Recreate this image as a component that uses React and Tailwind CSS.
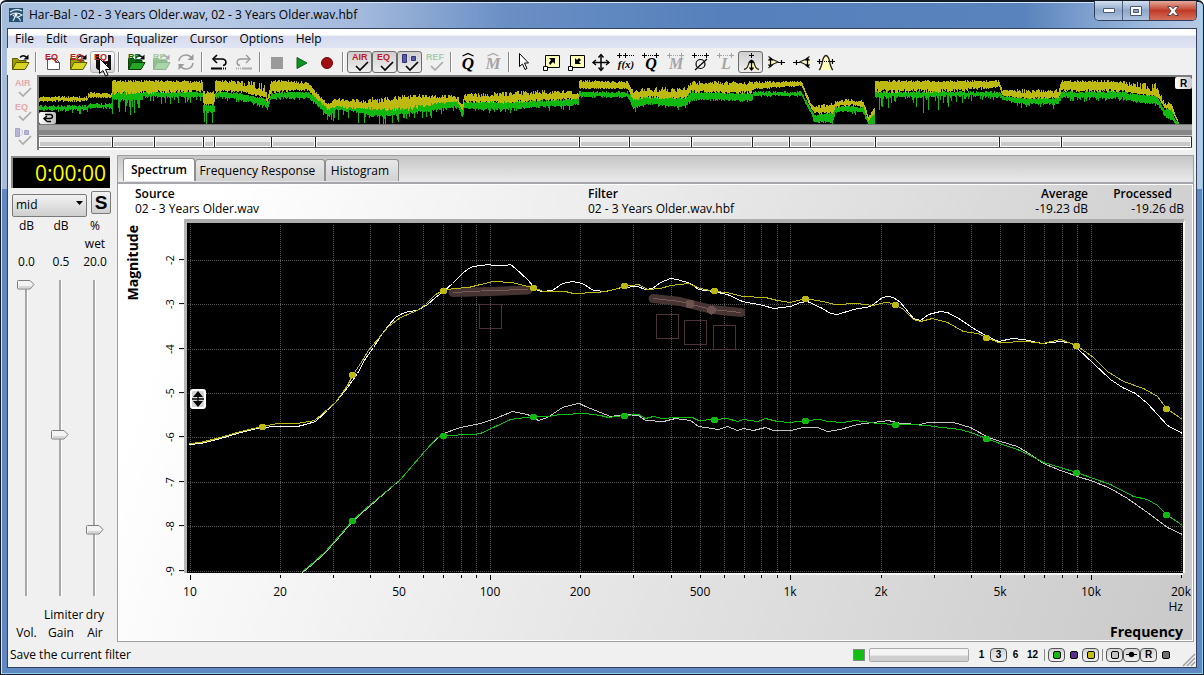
import { useState } from "react";

/* ---------- data ---------- */

const upperSource =
  "189,444 200,443 220,438 240,432 260,427 277,426 297,426 305,424 315,421 327,410 335,402 347,387 357,373 365,358 373,347 382,333 388,325 395,317 402,313 408,311 417,310 427,304 435,297 443,291 452,283 462,273 468,268 473,266 488,264 493,265 505,265 510,264 515,268 527,279 533,286 537,290 542,291 552,290 562,283 572,281 582,283 593,290 605,291 622,287 637,286 645,289 652,288 660,282 670,278 677,279 690,283 698,289 713,291 727,294 742,301 763,305 773,308 790,306 800,302 807,301 822,308 830,313 837,314 853,309 870,306 882,297 888,296 893,297 900,302 913,318 920,320 928,314 940,311 947,312 960,319 973,328 987,336 998,341 1012,338 1023,339 1042,343 1060,341 1072,343 1078,349 1093,363 1110,379 1122,387 1135,393 1147,403 1167,425 1182,433";
const upperFiltered =
  "189,443 200,442 220,437 240,431 262,426 277,423 297,423 314,420 335,402 347,385 352,375 362,360 368,350 382,333 388,326 400,317 417,310 425,304 435,294 443,290 453,288 468,287 480,284 493,281 512,282 523,285 533,287 543,291 565,291 573,293 597,292 610,290 624,286 638,284 647,289 660,288 670,285 688,283 700,288 714,291 727,292 742,296 765,297 777,300 790,302 805,298 822,301 835,304 857,303 872,305 885,302 893,303 903,309 913,319 920,321 932,318 947,322 963,331 977,333 986,337 998,342 1027,341 1042,343 1060,339 1076,345 1093,357 1107,371 1123,381 1143,388 1157,396 1166,408 1182,419";
const lowerSource =
  "302,572 313,563 325,552 340,535 352,521 370,505 400,479 425,450 437,438 443,433 460,427 480,423 495,418 512,411 527,414 538,420 547,417 562,407 573,404 579,403 585,406 600,412 610,416 624,414 638,415 645,420 663,421 675,418 690,420 698,426 718,429 727,426 737,430 743,428 753,430 765,427 773,430 790,430 803,427 817,427 827,431 840,429 857,424 873,422 888,420 900,423 920,424 927,422 953,422 970,427 988,437 1000,441 1017,446 1030,454 1043,463 1060,470 1077,476 1093,481 1110,488 1127,498 1147,512 1167,527 1182,534";
const lowerFiltered =
  "302,571 313,562 325,551 340,534 352,520 370,504 400,479 425,450 437,437 443,435 473,434 480,433 495,426 510,419 533,416 547,416 560,414 585,413 600,415 608,417 624,415 638,414 645,418 653,416 662,418 675,417 692,417 698,420 714,419 727,418 737,421 743,419 757,421 765,418 777,421 790,422 805,420 820,419 827,421 843,422 855,420 877,423 895,424 910,424 927,425 933,426 960,429 973,433 986,438 1002,444 1017,449 1030,455 1043,462 1060,467 1076,472 1093,478 1110,484 1133,496 1147,499 1157,505 1166,514 1182,525";

const upperNodes = [[262, 427], [352, 375], [443, 291], [533, 288], [624, 286], [714, 291], [805, 299], [895, 305], [986, 338], [1076, 346], [1166, 409]];
const lowerNodes = [[352, 521], [443, 436], [533, 417], [624, 416], [714, 420], [805, 421], [895, 425], [986, 439], [1076, 473], [1166, 515]];

const xOf = (f) => Math.round(189.5 + 300.4 * Math.log10(f / 10));
const pctX = (x) => `${((x - 187) / 996) * 100}%`;
const pctY = (y) => `${((y - 223) / 350) * 100}%`;

const gridFreqs = [10, 20, 30, 40, 50, 60, 70, 80, 90, 100, 200, 300, 400, 500, 600, 700, 800, 900, 1000, 2000, 3000, 4000, 5000, 6000, 7000, 8000, 9000, 10000, 20000];
const levels = [[-2, 260], [-3, 304], [-4, 349], [-5, 393], [-6, 437], [-7, 482], [-8, 526], [-9, 571]];
const freqLabels = [[10, "10"], [20, "20"], [50, "50"], [100, "100"], [200, "200"], [500, "500"], [1000, "1k"], [2000, "2k"], [5000, "5k"], [10000, "10k"], [20000, "20k"]];

/* x, yellow top, yellow bottom, green top, green bottom, upward jitter, yellow drop, green drop */
const envelope = [
  [39, 98, 101, 108, 110, 2, 2, 2], [87, 98, 101, 108, 110, 2, 2, 6], [88, 94, 98, 106, 108, 2, 1, 1], [111, 95, 98, 106, 108, 2, 1, 1],
  [112, 82, 92, 94, 100, 2, 4, 17], [142, 82, 92, 94, 100, 2, 3, 16], [143, 82, 91, 94, 97, 2, 4, 8], [202, 83, 91, 94, 97, 3, 3, 8],
  [203, 94, 103, 107, 112, 3, 4, 16], [214, 94, 103, 107, 112, 3, 4, 16], [215, 82, 91, 94, 97, 2, 3, 4], [235, 84, 91, 95, 99, 4, 2, 5],
  [250, 88, 94, 98, 102, 7, 2, 4], [265, 92, 97, 101, 106, 10, 3, 4], [267, 99, 103, 105, 109, 4, 1, 3], [271, 82, 91, 95, 98, 3, 3, 5],
  [308, 84, 90, 94, 98, 2, 2, 2], [316, 94, 98, 99, 104, 2, 2, 4], [328, 106, 110, 110, 117, 4, 2, 7], [336, 101, 106, 106, 110, 3, 3, 12],
  [360, 104, 108, 108, 112, 5, 3, 12], [372, 103, 108, 109, 116, 6, 3, 12], [390, 102, 109, 110, 116, 6, 3, 12], [401, 99, 108, 108, 114, 5, 6, 7],
  [430, 98, 104, 105, 111, 4, 3, 8], [457, 99, 102, 102, 106, 4, 1, 5], [462, 107, 111, 112, 117, 3, 1, 4], [464, 97, 101, 104, 109, 4, 3, 4],
  [500, 97, 102, 104, 109, 5, 3, 6], [540, 94, 100, 103, 107, 5, 3, 5], [570, 94, 99, 101, 105, 4, 2, 6], [578, 95, 98, 100, 104, 2, 2, 3],
  [579, 82, 89, 94, 97, 2, 1, 2], [626, 83, 89, 94, 97, 2, 1, 2], [632, 93, 99, 100, 108, 3, 4, 7], [645, 92, 97, 99, 104, 5, 3, 4],
  [684, 93, 98, 100, 107, 7, 3, 5], [690, 85, 91, 94, 99, 4, 3, 3], [750, 85, 92, 96, 101, 4, 3, 2], [752, 84, 89, 94, 96, 3, 2, 3],
  [800, 82, 86, 94, 96, 1, 1, 1], [809, 103, 107, 110, 113, 1, 2, 2], [813, 108, 113, 117, 122, 3, 2, 4], [831, 107, 112, 115, 122, 4, 3, 3],
  [834, 103, 107, 109, 112, 2, 2, 9], [850, 101, 105, 108, 111, 3, 2, 9], [862, 103, 107, 109, 113, 3, 2, 6], [867, 118, 122, 122, 125, 1, 0, 1],
  [873, 109, 114, 115, 124, 2, 1, 2], [874, 82, 90, 94, 97, 2, 5, 16], [900, 82, 90, 94, 97, 2, 4, 8], [925, 82, 90, 94, 97, 2, 4, 18],
  [960, 82, 89, 94, 96, 2, 4, 8], [998, 82, 87, 94, 97, 2, 2, 4], [1001, 91, 96, 98, 100, 2, 1, 1], [1020, 93, 98, 100, 104, 4, 2, 7],
  [1057, 93, 98, 100, 104, 4, 2, 6], [1060, 82, 90, 94, 97, 2, 3, 6], [1120, 83, 90, 94, 98, 3, 3, 4], [1130, 87, 93, 96, 101, 5, 2, 5],
  [1156, 93, 97, 98, 104, 10, 1, 4], [1163, 105, 108, 112, 115, 3, 1, 3], [1170, 104, 110, 111, 119, 4, 2, 5], [1174, 115, 119, 122, 125, 1, 0, 0], [1178, 124, 125, 125, 125, 0, 0, 0],
];

function buildTraces() {
  let seed = 7;
  const rnd = () => {
    seed = (seed * 16807) % 2147483647;
    return seed / 2147483647;
  };
  let yellow = "";
  let green = "";
  for (let i = 0; i < envelope.length - 1; i++) {
    const a = envelope[i];
    const b = envelope[i + 1];
    for (let x = a[0]; x < b[0]; x++) {
      const t = (x - a[0]) / (b[0] - a[0]);
      const v = a.map((n, k) => n + (b[k] - n) * t);
      const yt = Math.max(81, Math.round(v[1] + 1 - rnd() * v[5]));
      const yb = Math.round(v[2] + rnd() * v[6]);
      const gt = Math.round(v[3] - rnd() * 2);
      const spike = rnd() > 0.62 ? rnd() * v[7] : rnd() * 2;
      const gb = Math.min(125, Math.round(v[4] + spike));
      yellow += `M${x} ${yt}h1V${Math.min(yb, 125)}h-1z`;
      green += `M${x} ${gt}h1V${Math.max(gb, gt + 1)}h-1z`;
    }
  }
  return { yellow, green };
}
const traces = buildTraces();
const cuts = [38, 112, 154, 203, 214, 271, 315, 579, 629, 690, 751, 788, 809, 874, 998, 1060, 1190];

/* ---------- icons ---------- */

function Svg({ children, size = 24 }) {
  return (
    <svg viewBox={`0 0 ${size} ${size}`} width={size} height={size} className="block shrink-0" aria-hidden="true">
      {children}
    </svg>
  );
}

const Tag = ({ x = 0, y = 10, fill = "#c01c28", children }) => (
  <text x={x} y={y} fill={fill} fontSize="9" fontWeight="bold" fontFamily="Liberation Sans, Arial, sans-serif">{children}</text>
);

function Folder({ a, b, edge, arrow = "#000" }) {
  return (
    <>
      <path d="M4.500 19.500V8.500h5l1.500 2h7v2" fill={b} stroke={edge} />
      <path d="M4.500 19.500l3.500-7h13l-4 7z" fill={a} stroke={edge} />
      <path d="M12 7.500q3-3.500 7 0" fill="none" stroke={arrow} strokeWidth="1.300" />
      <path d="M20.500 4.500v5h-5z" fill={arrow} />
    </>
  );
}

const Open = () => <Svg><Folder a="#d8d425" b="#a09c00" edge="#5b5900" /></Svg>;
const EqNew = () => (
  <Svg>
    <path d="M6.500 8.500h8l4 4v7h-12z" fill="#fff" stroke="#555" />
    <path d="M14.500 8.500v4h4" fill="none" stroke="#555" />
    <Tag x={4}>EQ</Tag>
  </Svg>
);
const EqOpen = () => <Svg><Folder a="#d8d425" b="#a09c00" edge="#5b5900" /><Tag x={4}>EQ</Tag></Svg>;
const EqSave = () => (
  <Svg>
    <path d="M5 5h15v15h-13l-2-2z" fill="#111" />
    <path d="M8 5h9v6h-9z" fill="#f2f2f2" />
    <path d="M9 14h7v6h-7z" fill="#ddd" />
    <Tag x={3}>EQ</Tag>
  </Svg>
);
const RefOpen = () => <Svg><Folder a="#28a428" b="#0c6c0c" edge="#073f07" /><Tag x={4} fill="#126b12">RE</Tag></Svg>;
const RefDim = () => <Svg><Folder a="#a9d6a9" b="#8fc08f" edge="#8db58d" arrow="#a9a9a9" /><Tag x={4} fill="#a5cba5">RE</Tag></Svg>;
const Refresh = () => (
  <Svg>
    <path d="M5 11a7 6.500 0 0 1 12-4M19 13a7 6.500 0 0 1-12 4" fill="none" stroke="#9a9a9a" strokeWidth="1.500" />
    <path d="M19.500 4v6h-6zM4.500 20v-6h6z" fill="#9a9a9a" />
  </Svg>
);
const Undo = () => (
  <Svg>
    <path d="M6 9h9c5 0 5 6 1 6.500" fill="none" stroke="#000" strokeWidth="1.600" />
    <path d="M10 5L6 9l4 4" fill="none" stroke="#000" strokeWidth="1.600" />
    <path d="M4 18.500h10" stroke="#000" strokeWidth="2" />
    <path d="M14 18.500h6" stroke="#000" strokeWidth="2" strokeDasharray="1 1" />
  </Svg>
);
const Redo = () => (
  <Svg>
    <path d="M18 9H9c-5 0-5 6-1 6.500" fill="none" stroke="#999" strokeWidth="1.400" />
    <path d="M14 5l4 4-4 4" fill="none" stroke="#999" strokeWidth="1.400" />
    <path d="M10 18.500h10" stroke="#aaa" strokeWidth="2" />
    <path d="M4 18.500h6" stroke="#aaa" strokeWidth="2" strokeDasharray="1 1" />
  </Svg>
);
const Stop = () => <Svg><path d="M6 7h12v12H6z" fill="#9a9a9a" /></Svg>;
const Play = () => <Svg><path d="M7 7.500l10 5.500-10 5.500z" fill="#119022" stroke="#0b6417" /></Svg>;
const Rec = () => <Svg><circle cx="12" cy="13" r="5.500" fill="#a00d12" stroke="#6e0508" /></Svg>;
const Check = ({ c = "#000" }) => <path d="M8 16l4 4 8-8" fill="none" stroke={c} strokeWidth="1.700" />;
const Polarity = ({ a = "#5a5aa8", b = "#333377", y = 0 }) => (
  <g transform={`translate(0 ${y})`}>
    <path d="M4.500 5.500h4v8h-4z" fill={a} stroke={b} />
    <path d="M13.500 7.500h4v4h-4z" fill={a} stroke={b} />
    <path d="M10 6.500q3 3 0 6" fill="none" stroke="#999" strokeDasharray="1 1" />
  </g>
);
const Air = ({ dim }) => <Svg><Tag x={4} fill={dim ? "#e2aaaa" : "#c01c28"}>AIR</Tag><Check c={dim ? "#aaa" : "#000"} /></Svg>;
const Eq = ({ dim }) => <Svg><Tag x={4} fill={dim ? "#e2aaaa" : "#c01c28"}>EQ</Tag><Check c={dim ? "#aaa" : "#000"} /></Svg>;
const Pol = ({ dim }) => <Svg><Polarity a={dim ? "#b5b5d8" : undefined} b={dim ? "#a5a5c8" : undefined} y={-1} /><Check c={dim ? "#aaa" : "#000"} /></Svg>;
const RefCheck = () => <Svg><Tag x={3} fill="#a8cbb0">REF</Tag><Check c="#aaa" /></Svg>;

function Letter({ ch, c = "#000", hat, dots, size = 17 }) {
  return (
    <Svg>
      {hat && <path d="M6.500 6L12 3.500 17.500 6" fill="none" stroke={c} strokeWidth="1.200" />}
      {dots && <Dots c={c} />}
      <text x="12" y="19" textAnchor="middle" fill={c} fontSize={size} fontWeight="bold" fontStyle="italic" fontFamily="Liberation Serif, serif">{ch}</text>
    </Svg>
  );
}
const Dots = ({ c = "#000", y = 5 }) => (
  <g stroke={c} shapeRendering="crispEdges">
    <path d={`M5.500 ${y - 2}v5M3 ${y + 0.5}h5M17.500 ${y - 2}v5M15 ${y + 0.5}h5`} />
    <path d={`M9 ${y + 0.5}h6`} strokeDasharray="1 1" />
  </g>
);
const Pointer = () => (
  <Svg><path d="M5.500 3.500v13l3-2.500 2.500 5.500 2-1-2.500-5.500h4z" fill="#fff" stroke="#000" /></Svg>
);
const Zoom = ({ out }) => (
  <Svg>
    <path d="M6.500 5.500h14v12h-14z" fill="#ffffb8" stroke="#000" />
    <path d="M4.500 16.500h4v4h-4z" fill="#fff" stroke="#000" />
    {out ? <path d="M11 8v6h6l-2-2 2-2-2-2-2 2z" /> : <path d="M16 8v6l-2-2-3 3-1-2 2-3-2-2z" />}
  </Svg>
);
const Move = () => (
  <Svg>
    <path d="M12 5v15M4.500 12.500h15" stroke="#000" strokeWidth="1.500" />
    <path d="M9.500 7.500l2.500-3 2.500 3M9.500 17.500l2.500 3 2.500-3M7 10l-3 2.500 3 2.500M17 10l3 2.500-3 2.500" fill="none" stroke="#000" strokeWidth="1.400" />
  </Svg>
);
const Fx = () => (
  <Svg>
    <g stroke="#000" shapeRendering="crispEdges">
      <path d="M5.500 3v5M3 5.500h5M11.500 3v5M9 5.500h5" />
      <path d="M15 5.500h5" strokeDasharray="1 1" />
    </g>
    <text x="12" y="18" textAnchor="middle" fontSize="11" fontWeight="bold" fontStyle="italic" fontFamily="Liberation Serif, serif">f(x)</text>
  </Svg>
);
const Null = () => (
  <Svg><Dots /><circle cx="11.500" cy="14" r="4.500" fill="none" stroke="#000" strokeWidth="1.200" /><path d="M6 20L18 9" stroke="#000" strokeWidth="1.200" /></Svg>
);
const Bell = () => (
  <Svg>
    <path d="M12.500 3v5M10 5.500h5" stroke="#000" />
    <path d="M5 19.500q4-1 5-7 2.500-4 5 0 1 6 5 7" fill="#ffffb8" stroke="#222" strokeWidth="1.300" />
    <path d="M12.500 11v9M10.500 13l2-2.500 2 2.500M10.500 17.500l2 2.500 2-2.500" fill="none" stroke="#000" strokeWidth="1.300" />
  </Svg>
);
const Taper = ({ flip }) => (
  <Svg>
    <g transform={flip ? "translate(25 0) scale(-1 1)" : undefined}>
      <path d="M4.500 6.500q4 4 10 5.500-6 1.500-10 6" fill="#ffffb8" stroke="#222" strokeWidth="1.200" />
      <path d="M6.500 8.500v8M4.500 10.500l2-2 2 2M4.500 14.500l2 2 2-2" fill="none" stroke="#000" strokeWidth="1.300" />
      <path d="M14 12.500h7M17.500 10v5" stroke="#000" strokeWidth="1.200" />
    </g>
  </Svg>
);
const Peak = () => (
  <Svg>
    <path d="M5 20q2-1 4-11 3-7 6 0 2 10 4 11" fill="#ffffb8" stroke="#222" strokeWidth="1.300" />
    <path d="M3 11.500h5M5.500 9v5M16 11.500h5M18.500 9v5" stroke="#000" strokeWidth="1.200" />
    <path d="M8 11.500h8" stroke="#000" strokeDasharray="1 1" />
  </Svg>
);

/* ---------- toolbar ---------- */

function Tool({ label, children, pressed, hover }) {
  const face = pressed
    ? "border-[#6c6c6c] bg-linear-to-b from-[#cfcfcf] to-[#efefef]"
    : hover
      ? "border-[#b0b0b0] bg-linear-to-b from-white to-[#d8d8d8]"
      : "border-transparent";
  return (
    <button type="button" aria-label={label} className={`flex h-[22px] w-[25px] shrink-0 items-center justify-center rounded-[3px] border ${face}`}>
      {children}
    </button>
  );
}
const Sep = () => <span className="mx-[3px] h-5 w-[2px] shrink-0 border-l border-[#8a8a8a] bg-white" />;

function Toolbar() {
  return (
    <div className="-ml-px flex h-[27px] items-center bg-[#f0f0f0]">
      <Tool label="Open"><Open /></Tool>
      <Sep />
      <Tool label="New filter"><EqNew /></Tool>
      <Tool label="Open filter"><EqOpen /></Tool>
      <Tool label="Save filter" hover><EqSave /></Tool>
      <Sep />
      <Tool label="Open reference"><RefOpen /></Tool>
      <Tool label="Close reference"><RefDim /></Tool>
      <Tool label="Refresh"><Refresh /></Tool>
      <Sep />
      <Tool label="Undo"><Undo /></Tool>
      <Tool label="Redo"><Redo /></Tool>
      <Sep />
      <Tool label="Stop"><Stop /></Tool>
      <Tool label="Play"><Play /></Tool>
      <Tool label="Record"><Rec /></Tool>
      <Sep />
      <Tool label="Air" pressed><Air /></Tool>
      <Tool label="Equalizer" pressed><Eq /></Tool>
      <Tool label="Loudness" pressed><Pol /></Tool>
      <Tool label="Reference"><RefCheck /></Tool>
      <Sep />
      <Tool label="Quality"><Letter ch="Q" hat /></Tool>
      <Tool label="Match"><Letter ch="M" c="#a5a5a5" hat /></Tool>
      <Sep />
      <Tool label="Pointer"><Pointer /></Tool>
      <Tool label="Zoom in"><Zoom /></Tool>
      <Tool label="Zoom out"><Zoom out /></Tool>
      <Tool label="Pan"><Move /></Tool>
      <Tool label="Function"><Fx /></Tool>
      <Tool label="Range quality"><Letter ch="Q" dots size={16} /></Tool>
      <Tool label="Range match"><Letter ch="M" c="#a5a5a5" dots size={16} /></Tool>
      <Tool label="Null range"><Null /></Tool>
      <Tool label="Level range"><Letter ch="L" c="#a5a5a5" dots size={16} /></Tool>
      <Tool label="Bell" pressed><Bell /></Tool>
      <Tool label="Low shelf"><Taper /></Tool>
      <Tool label="High shelf"><Taper flip /></Tool>
      <Tool label="Peak"><Peak /></Tool>
    </div>
  );
}

/* ---------- window parts ---------- */

function TitleBar() {
  return (
    <header className="flex h-[29px] items-start pl-[2px]">
      <span className="mt-[6px] flex">
        <svg viewBox="0 0 14 14" width="14" height="14" aria-hidden="true">
          <path d="M0 0h14v14H0z" fill="#27506f" />
          <path d="M1 4q6-4 12-1M1 7q6-4 12 0-6 4-9 0M6 9l-2 4M8 9q4 2 3 4" fill="none" stroke="#dcecf5" strokeWidth="1.200" />
          <circle cx="7" cy="6.500" r="1.500" fill="#fff" />
        </svg>
      </span>
      <h1 className="mt-[4px] ml-[6px] text-[12px] leading-[18px] whitespace-nowrap">
        Har-Bal - 02 - 3 Years Older.wav, 02 - 3 Years Older.wav.hbf
      </h1>
      <div className="-mt-px ml-auto flex h-5 overflow-hidden rounded-b-[5px] border border-t-0 border-[#2e3f5c]">
        <button type="button" aria-label="Minimize" className="flex w-7 items-center justify-center border-r border-[#4b607f] bg-linear-to-b from-[#d3dff0] via-[#8ea8cb] to-[#aec4e0]">
          <svg viewBox="0 0 12 5" width="12" height="5" aria-hidden="true"><path d="M.5 .5h11v4h-11z" fill="#fff" stroke="#4c5a70" /></svg>
        </button>
        <button type="button" aria-label="Restore" className="flex w-[27px] items-center justify-center border-r border-[#4b607f] bg-linear-to-b from-[#d3dff0] via-[#8ea8cb] to-[#aec4e0]">
          <svg viewBox="0 0 12 10" width="12" height="10" aria-hidden="true"><path d="M.5 .5h11v9h-11z" fill="#fff" stroke="#4c5a70" /><path d="M3.500 3.500h5v3h-5z" fill="#8ea8cb" stroke="#4c5a70" /></svg>
        </button>
        <button type="button" aria-label="Close" className="flex w-[46px] items-center justify-center bg-linear-to-b from-[#e5a89c] via-[#bf3a26] to-[#d5705a]">
          <svg viewBox="0 0 12 10" width="12" height="10" aria-hidden="true"><path d="M.5 .5h3.500l2 2.200 2-2.200h3.500L8 5l3.500 4.500H8L6 7.300 4 9.500H.5L4 5z" fill="#fff" stroke="#5b4048" /></svg>
        </button>
      </div>
    </header>
  );
}

function MenuBar() {
  return (
    <nav className="flex h-[19px] items-center gap-3 bg-linear-to-b from-white from-30% via-[#d6dcef] via-40% to-[#dfe5f4] pl-[7px] text-[12px]">
      {["File", "Edit", "Graph", "Equalizer", "Cursor", "Options", "Help"].map((m) => (
        <button type="button" key={m} className="leading-[18px]">{m}</button>
      ))}
    </nav>
  );
}

function Overview() {
  return (
    <section className="flex h-[75px]">
      <div className="flex w-[29px] shrink-0 flex-col items-center pt-px">
        <button type="button" aria-label="Air overlay"><Air dim /></button>
        <button type="button" aria-label="Equalizer overlay"><Eq dim /></button>
        <button type="button" aria-label="Loudness overlay"><Pol dim /></button>
      </div>
      <div className="mr-[4px] flex min-w-0 flex-1 flex-col border-t-2 border-l-2 border-[#7d7d7d] bg-white">
        <div className="relative h-[47px] bg-black">
          <svg viewBox="39 78 1152 47" preserveAspectRatio="none" className="block h-full w-full" shapeRendering="crispEdges" aria-hidden="true">
            <path d={traces.green} fill="#10b810" />
            <path d={traces.yellow} fill="#bdb910" />
          </svg>
          <button type="button" aria-label="Loop" className="absolute bottom-0 left-0 flex h-3 w-[17px] items-center justify-center rounded-[2px] bg-linear-to-r from-white to-[#bcbcbc]">
            <svg viewBox="0 0 12 10" width="12" height="10" aria-hidden="true"><path d="M3 1.500h5q2.500 0 2.500 2T8 5.500H2M5 3L2 5.500 5 8.500M5 8.500h4" fill="none" stroke="#000" strokeWidth="1.400" /></svg>
          </button>
          <button type="button" className="absolute top-0 right-0 flex h-3 w-[17px] items-center justify-center rounded-[2px] bg-linear-to-r from-white to-[#c8c8c8] font-['Liberation_Sans',sans-serif] text-[10px] font-bold">R</button>
        </div>
        <div className="h-3 border-t border-b border-t-[#777] border-b-[#d0d0d0] bg-linear-to-b from-[#a6a6a6] from-50% to-[#868686] to-50%" />
        <div className="flex h-3 border-t border-b border-[#666] bg-white">
          {cuts.slice(1).map((c, i) => (
            <button
              type="button"
              key={c}
              aria-label={`Section ${i + 1}`}
              className="border-r border-[#222] bg-linear-to-b from-[#ececec] from-50% to-[#c9c9c9] to-50% shadow-[inset_-1px_-1px_0_white,inset_1px_1px_0_white]"
              style={{ width: `${((c - cuts[i]) / 1152) * 100}%` }}
            />
          ))}
        </div>
      </div>
    </section>
  );
}

function Fader({ label, initial }) {
  const [v, setV] = useState(initial);
  return (
    <div className="relative mx-auto w-[18px]">
      <div className="mx-auto h-full w-[3px] border-l-2 border-[#a8a8a8] bg-white" />
      <svg viewBox="0 0 18 10" width="18" height="10" className="absolute left-0" style={{ top: `${(1 - v / 1000) * 97}%` }} aria-hidden="true">
        <path d="M1.500 .5h11.500l4 4-4 4.500H1.500q-1 0-1-1V1.500q0-1 1-1z" fill="#f3f3f3" stroke="#7d7d7d" />
        <path d="M2 6h13l-2 2H2z" fill="#d6d6d6" />
      </svg>
      <input type="range" min="0" max="1000" value={v} onChange={(e) => setV(+e.target.value)} aria-label={label} className="absolute inset-0 h-full w-full opacity-0 [writing-mode:vertical-lr]" />
    </div>
  );
}

function Controls() {
  return (
    <aside className="flex w-[109px] shrink-0 flex-col pt-[6px]">
      <output className="mr-[7px] ml-[3px] flex h-[32px] items-center justify-end border-t-2 border-l-2 border-[#8c8c8c] bg-black pr-1 text-[21px] leading-none text-[#ffff00]">0:00:00</output>
      <div className="mt-[3px] mr-[6px] ml-1 flex h-[23px] gap-1">
        <div className="relative flex-1">
          <select aria-label="Channel" className="h-full w-full appearance-none rounded-[2px] border border-[#7a7a7a] bg-linear-to-b from-[#f2f2f2] to-[#cfcfcf] pl-[3px] text-[12px]">
            <option>mid</option>
            <option>side</option>
            <option>left</option>
            <option>right</option>
          </select>
          <svg viewBox="0 0 7 4" width="7" height="4" className="pointer-events-none absolute top-[10px] right-[4px]" aria-hidden="true"><path d="M0 0h7L3.500 4z" /></svg>
        </div>
        <button type="button" className="w-5 rounded-[2px] border border-[#7a7a7a] bg-linear-to-b from-[#f2f2f2] to-[#cfcfcf] font-['Liberation_Sans',sans-serif] text-[19px] leading-none font-bold">S</button>
      </div>
      <div className="mt-[3px] ml-px grid flex-1 grid-cols-[35px_34px_34px] grid-rows-[18px_18px_18px_1fr_18px_18px] text-center text-[12px] leading-[18px]">
        <span>dB</span><span>dB</span><span>%</span>
        <span /><span /><span>wet</span>
        <span>0.0</span><span>0.5</span><span>20.0</span>
        <div className="col-span-3 mt-[9px] mb-[10px] grid grid-cols-[34px_34px_35px]">
          <Fader label="Vol." initial={1000} />
          <Fader label="Limiter Gain" initial={512} />
          <Fader label="Air" initial={201} />
        </div>
        <span /><span>Limiter</span><span>dry</span>
        <span>Vol.</span><span>Gain</span><span>Air</span>
      </div>
    </aside>
  );
}

function Plot() {
  return (
    <svg viewBox="187 223 996 350" preserveAspectRatio="none" className="absolute inset-0 h-full w-full" shapeRendering="crispEdges" role="img" aria-label="Magnitude by frequency">
      <g stroke="#5a5a5a" strokeDasharray="1 1" fill="none">
        {gridFreqs.map((f) => <path key={f} d={`M${xOf(f) + 0.5} 225V573`} />)}
        {levels.map(([l, y]) => <path key={l} d={`M188 ${y + 0.5}H1183`} />)}
      </g>
      <g fill="none" stroke="#4a3433">
        <path d="M656.500 314.500h22v24h-22zM684.500 320.500h22v24h-22zM713.500 325.500h22v24h-22zM479.500 304.500h22v24h-22z" />
      </g>
      <g fill="none" stroke="#463433" strokeLinecap="round" strokeLinejoin="round" strokeWidth="9" shapeRendering="auto">
        <path d="M453 292.500L490 291.500 528 290" />
        <path d="M653 298.500L680 301.500 690 304 712 309.500 741 312.500" />
      </g>
      <g fill="none" stroke="#7a5b59">
        <path d="M453 292.500L490 290.500 528 289.500" />
        <path d="M653 298.500L680 301.500 690 304 712 309.500 741 312.500" />
      </g>
      <g fill="#6e5250"><circle cx="690" cy="304" r="4.500" /><circle cx="711.500" cy="310" r="4.500" /></g>
      <g fill="none" transform="translate(.5 .5)">
        <polyline points={lowerSource} stroke="#c4c4c4" />
        <polyline points={lowerFiltered} stroke="#10c010" />
        <polyline points={upperSource} stroke="#ffffff" />
        <polyline points={upperFiltered} stroke="#bdb910" />
      </g>
      {lowerNodes.map(([x, y]) => <circle key={x} cx={x + 0.5} cy={y} r="3.500" fill="#10b810" />)}
      {upperNodes.map(([x, y]) => <circle key={x} cx={x + 0.5} cy={y} r="3.500" fill="#bdb910" />)}
    </svg>
  );
}

function Spectrum() {
  return (
    <div className="flex flex-1 flex-col border border-white bg-[linear-gradient(110deg,#ffffff_8%,#c9c9c9_100%)] text-[12px]">
      <div className="flex pt-px pr-[8px] pl-4 leading-[15px]">
        <div className="w-[453px]"><b className="font-semibold">Source</b><p>02 - 3 Years Older.wav</p></div>
        <div><b className="font-semibold">Filter</b><p>02 - 3 Years Older.wav.hbf</p></div>
        <div className="ml-auto text-right"><b className="font-semibold">Average</b><p>-19.23 dB</p></div>
        <div className="w-24 text-right"><b className="pr-3 font-semibold">Processed</b><p>-19.26 dB</p></div>
      </div>
      <div className="mt-[3px] flex flex-1">
        <div className="flex w-[65px] shrink-0">
          <span className="mt-[6px] ml-[4px] rotate-180 self-start text-[14px] leading-[20px] font-bold [writing-mode:vertical-rl]">Magnitude</span>
          <div className="relative mt-1 flex-1">
            {levels.map(([l, y]) => (
              <span key={l} className="absolute right-0 flex -translate-y-1/2 items-center gap-[2px]" style={{ top: pctY(y) }}>
                <span className="rotate-180 text-[11px] leading-[14px] [writing-mode:vertical-rl]">{l}</span>
                <span className="h-px w-[5px] bg-black" />
              </span>
            ))}
          </div>
        </div>
        <div className="relative flex-1 border-t-4 border-r-2 border-l-[3px] border-t-[#adadad] border-r-[#f4f4f4] border-l-[#b4b4b4] bg-black">
          <Plot />
          <button type="button" aria-label="Drag level" className="absolute left-[3px] flex h-5 w-4 items-center justify-center rounded-[3px] border-2 border-white bg-[#d4d4d4]" style={{ top: pctY(389) }}>
            <svg viewBox="0 0 12 16" width="12" height="16" aria-hidden="true"><path d="M6 0l5 6H1zM6 16l5-6H1z" /><path d="M0 8h12M6 5v6" stroke="#000" strokeWidth="1.300" /></svg>
          </button>
        </div>
        <div className="w-[7px] shrink-0" />
      </div>
      <div className="mr-[9px] ml-[68px] border-t-2 border-[#f6f6f6]">
        <div className="relative h-[25px]">
          {gridFreqs.map((f) => <i key={f} className={f === 10 || f === 100 || f === 1000 || f === 10000 ? "absolute top-0 h-[5px] w-px bg-black" : "absolute top-0 h-[3px] w-px bg-black"} style={{ left: pctX(xOf(f)) }} />)}
          {freqLabels.map(([f, t]) => <span key={f} className="absolute top-[8px] -translate-x-1/2 leading-[18px]" style={{ left: pctX(xOf(f)) }}>{t}</span>)}
        </div>
        <p className="text-right leading-[14px]">Hz</p>
        <p className="mt-[10px] text-right text-[14px] leading-[16px] font-bold">Frequency</p>
      </div>
    </div>
  );
}

function Main() {
  return (
    <main className="mt-[5px] mr-[2px] flex min-w-0 flex-1 flex-col border border-[#a0a0a0] bg-[#a5a5ab]">
      <div role="tablist" className="flex h-[25px] items-end bg-linear-to-b from-[#c6c6c6] to-[#e9e9e9] pl-[5px] text-[12px]">
        <button type="button" role="tab" aria-selected="true" className="h-[23px] w-[72px] rounded-t-[3px] border border-b-0 border-[#909090] bg-white font-semibold">Spectrum</button>
        <button type="button" role="tab" aria-selected="false" className="h-[22px] w-[130px] rounded-t-[3px] border border-b-0 border-[#909090] bg-linear-to-b from-[#e8e8e8] to-[#d2d2d2] pr-[5px] text-center">Frequency Response</button>
        <button type="button" role="tab" aria-selected="false" className="h-[22px] w-[74px] rounded-t-[3px] border border-b-0 border-[#909090] bg-linear-to-b from-[#e8e8e8] to-[#d2d2d2] pr-1">Histogram</button>
      </div>
      <div className="mb-[2px] h-[1px] bg-[#e6e6e6]" />
      <Spectrum />
    </main>
  );
}

function Mini({ label, on, children }) {
  return (
    <button type="button" aria-label={label} className={`flex h-[14px] w-[17px] shrink-0 items-center justify-center rounded-[4px] border font-['Liberation_Sans',sans-serif] text-[10px] leading-none font-bold ${on ? "border-[#555] bg-linear-to-b from-[#d5d5d5] to-[#f0f0f0]" : "border-transparent"}`}>
      {children}
    </button>
  );
}
const MiniSep = () => <span className="mx-[3px] h-3 w-px bg-[#8a8a8a]" />;

function StatusBar() {
  return (
    <footer className="flex h-[25px] items-center pl-[2px]">
      <span className="mr-auto text-[12px]">Save the current filter</span>
      <span className="mr-1 size-3 border border-[#888] bg-[#10c010]" />
      <span className="mr-1 h-[14px] w-[100px] rounded-[2px] border border-[#aaa] bg-linear-to-b from-[#f4f4f4] from-50% to-[#cfcfcf] to-60%" />
      <Mini label="1">1</Mini>
      <Mini label="3" on>3</Mini>
      <Mini label="6">6</Mini>
      <Mini label="12">12</Mini>
      <MiniSep />
      <Mini label="Green trace" on><span className="size-2 rounded-[2px] border border-black bg-[#10b810]" /></Mini>
      <Mini label="Purple trace"><span className="size-2 rounded-[2px] border border-black bg-[#5b2d91]" /></Mini>
      <Mini label="Yellow trace" on><span className="size-2 rounded-[2px] border border-black bg-[#c4bd10]" /></Mini>
      <MiniSep />
      <Mini label="Original trace" on><span className="size-2 rounded-[2px] border border-black bg-[#c4c4c4]" /></Mini>
      <Mini label="Nodes" on>
        <svg viewBox="0 0 11 7" width="11" height="7" aria-hidden="true"><path d="M0 3.500h11" stroke="#000" /><circle cx="5.500" cy="3.500" r="2.700" /></svg>
      </Mini>
      <Mini label="R" on>R</Mini>
      <Mini label="Background trace"><span className="size-2 rounded-[2px] border border-black bg-[#707070]" /></Mini>
      <span className="ml-2 self-end">
        <svg viewBox="0 0 14 14" width="14" height="14" aria-hidden="true"><path d="M1 13L13 1M5 13l8-8M9 13l4-4" stroke="#a0a0a0" strokeWidth="1.500" /></svg>
      </span>
    </footer>
  );
}

export default function App() {
  return (
    <div className="relative flex min-h-screen flex-col rounded-t-[6px] border border-t-2 border-[#141c28] bg-[linear-gradient(180deg,transparent_187px,#6089c3_187px),linear-gradient(90deg,#a5bcdc_0%,#b9cbe6_15%,#a3b9dc_30%,#6a8fc5_42%,#5580bb_60%,#5983bd_85%,#a2bde0_96%,#b8cae4_100%)] px-[6px] pb-[6px] font-['Open_Sans','Noto_Sans',sans-serif] text-black shadow-[inset_1px_1px_0_#d5e4f5,inset_-1px_-1px_0_#8fd0ee]">
      <TitleBar />
      <div className="-mt-[3px] flex flex-1 flex-col border border-[#33425c] bg-[#f0f0f0]">
        <MenuBar />
        <Toolbar />
        <Overview />
        <div className="flex flex-1">
          <Controls />
          <Main />
        </div>
        <StatusBar />
      </div>
      <svg viewBox="0 0 12 19" width="12" height="19" className="pointer-events-none absolute top-[56px] left-[98px]" aria-hidden="true">
        <path d="M.5 .5v15l3.500-3 2.500 5.500 2.500-1-2.500-5.500h5z" fill="#fff" stroke="#000" />
      </svg>
    </div>
  );
}
